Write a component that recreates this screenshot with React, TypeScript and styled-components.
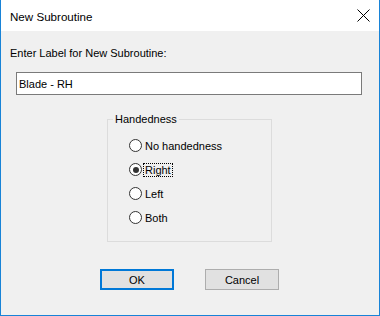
import React, { useState } from 'react';
import styled, { createGlobalStyle } from 'styled-components';

const GlobalStyle = createGlobalStyle`
	html, body {
		margin: 0;
		padding: 0;
		background: #ffffff;
	}
	* {
		box-sizing: border-box;
	}
`;

const Window = styled.div`
	width: 380px;
	height: 316px;
	display: flex;
	flex-direction: column;
	border: 1px solid #1883d7;
	border-top: none;
	background-color: #f0f0f0;
	font-family: 'Liberation Sans', Arial, sans-serif;
	font-size: 11px;
	color: #000000;
	overflow: hidden;
`;

const TitleBar = styled.div`
	height: 31px;
	flex: none;
	display: flex;
	align-items: center;
	justify-content: space-between;
	background-color: #ffffff;
	padding: 0 9px 0 9px;
`;

const Title = styled.span`
	font-size: 11.6px;
	padding-top: 1px;
`;

const CloseButton = styled.button`
	width: 14px;
	height: 14px;
	padding: 0;
	border: none;
	background: transparent;
	display: flex;
	align-items: center;
	justify-content: center;
	cursor: pointer;
`;

const Body = styled.div`
	flex: 1;
	padding: 16px 17px 0 8px;
	display: flex;
	flex-direction: column;
`;

const Prompt = styled.label`
	line-height: 13px;
	margin-left: 1px;
`;

const TextBox = styled.input`
	margin: 12px 0 0 7px;
	width: 346px;
	height: 23px;
	border: 1px solid #7a7a7a;
	background: #ffffff;
	padding: 0 2px;
	font-family: inherit;
	font-size: 11px;
	color: #000000;
	outline: none;
`;

const Group = styled.fieldset`
	margin: 18px 0 0 98px;
	width: 165px;
	height: 129px;
	border: 1px solid #dcdcdc;
	padding: 13px 0 0 21px;
	display: flex;
	flex-direction: column;
	gap: 11px;
	min-inline-size: 0;
`;

const Legend = styled.legend`
	padding: 0 2px;
	margin-left: -16px;
	line-height: 13px;
`;

const Option = styled.label`
	display: flex;
	align-items: center;
	height: 13px;
	cursor: pointer;
`;

const Circle = styled.span<{ $checked: boolean }>`
	width: 13px;
	height: 13px;
	flex: none;
	border: 1px solid #333333;
	border-radius: 50%;
	background: #ffffff;
	display: flex;
	align-items: center;
	justify-content: center;
	&::after {
		content: '';
		width: 6px;
		height: 6px;
		border-radius: 50%;
		background: #333333;
		display: ${({ $checked }) => ($checked ? 'block' : 'none')};
	}
`;

const OptionText = styled.span<{ $focused: boolean }>`
	margin-left: 2px;
	padding: 0 1px;
	line-height: 12px;
	outline: ${({ $focused }) => ($focused ? '1px dotted #000000' : 'none')};
	outline-offset: 0;
`;

const ButtonRow = styled.div`
	display: flex;
	gap: 31px;
	margin: 27px 0 0 91px;
`;

const DialogButton = styled.button<{ $default?: boolean }>`
	width: 74px;
	height: 21px;
	padding: 0;
	background: #e1e1e1;
	border: ${({ $default }) => ($default ? '2px solid #0078d7' : '1px solid #adadad')};
	font-family: 'Liberation Sans', Arial, sans-serif;
	font-size: 11px;
	color: #000000;
	cursor: pointer;
`;

const options = ['No handedness', 'Right', 'Left', 'Both'];

export default function App() {
	const [ label, setLabel ] = useState('Blade - RH');
	const [ hand, setHand ] = useState('Right');
	return (
		<>
			<GlobalStyle />
			<Window>
				<TitleBar>
					<Title>New Subroutine</Title>
					<CloseButton aria-label="Close">
						<svg width="13" height="13" viewBox="0 0 13 13">
							<path d="M0.5 0.5 L12.5 12.5 M12.5 0.5 L0.5 12.5" stroke="#000" strokeWidth="1" fill="none" />
						</svg>
					</CloseButton>
				</TitleBar>
				<Body>
					<Prompt>Enter Label for New Subroutine:</Prompt>
					<TextBox value={label} onChange={(e) => setLabel(e.target.value)} />
					<Group>
						<Legend>Handedness</Legend>
						{options.map((o) => (
							<Option key={o} onClick={() => setHand(o)}>
								<Circle $checked={hand === o} />
								<OptionText $focused={hand === o}>{o}</OptionText>
							</Option>
						))}
					</Group>
					<ButtonRow>
						<DialogButton $default>OK</DialogButton>
						<DialogButton>Cancel</DialogButton>
					</ButtonRow>
				</Body>
			</Window>
		</>
	);
}
